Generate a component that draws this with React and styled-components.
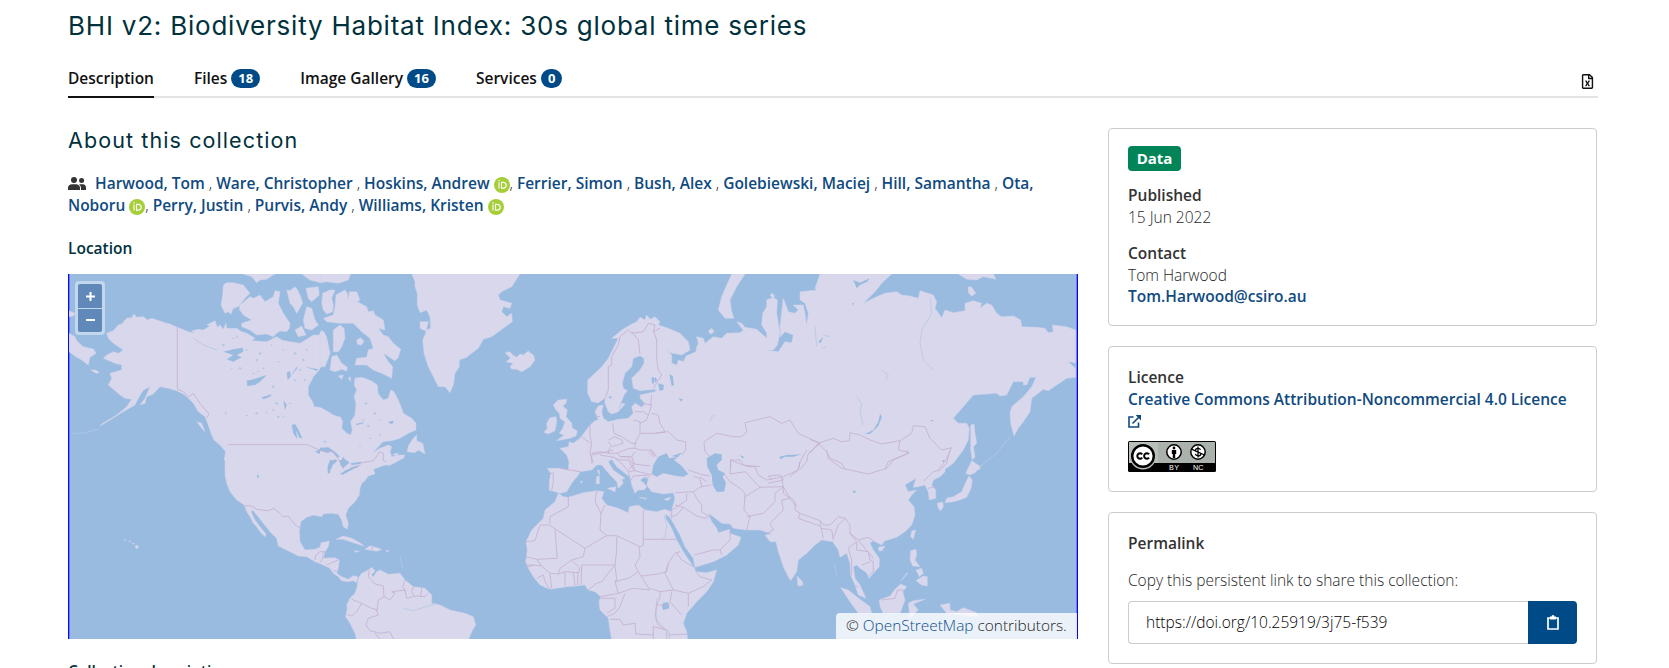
import React from 'react';
import styled, { createGlobalStyle } from 'styled-components';
import { FaRegFileExcel } from 'react-icons/fa';

const Global = createGlobalStyle`
  * { box-sizing: border-box; }
  html, body { margin: 0; background: #fff; overflow: hidden; }
  body { font: 300 15.5px/22px "Open Sans", "Liberation Sans", sans-serif; color: #262626; height: 668px; }
  a { color: #0f4a80; font-weight: 600; text-decoration: none; }
`;

const Page = styled.main`
  padding: 0 71px 0 68px;
  height: 668px;
  overflow: hidden;
`;
const Title = styled.h1`
  margin: 0;
  padding-top: 9px;
  font: 400 26px/34px Inter, sans-serif;
  letter-spacing: 0.78px;
  color: #00313c;
  white-space: nowrap;
`;
const TabBar = styled.nav`
  display: flex;
  gap: 40px;
  height: 43px;
  margin-top: 12px;
  border-bottom: 2px solid #e4e4e4;
`;
const Tab = styled.a`
  display: flex;
  gap: 4px;
  padding-top: 12px;
  height: 43px;
  color: #111;
  line-height: 22px;
  border-bottom: 2px solid ${(p) => (p.$active ? '#111' : 'transparent')};
`;
const Count = styled.span`
  height: 19px;
  margin-top: 2px;
  padding: 0 7px;
  border-radius: 10px;
  background: #004b87;
  color: #fff;
  font-size: 13px;
  font-weight: 700;
  line-height: 19px;
`;
const Export = styled.span`
  margin: 19px 3px 0 auto;
  color: #111;
  svg { display: block; }
`;
const Columns = styled.div`
  display: flex;
  justify-content: space-between;
  padding-top: 30px;
`;
const Main = styled.section`
  width: 1010px;
`;
const SectionTitle = styled.h2`
  margin: -3px 0 0;
  font: 400 21.5px/30px Inter, sans-serif;
  letter-spacing: 1.1px;
  color: #00313c;
`;
const Authors = styled.p`
  margin: 17px 0 0;
  height: 44px;
  white-space: nowrap;
`;
const PeopleIcon = styled.svg`
  width: 18px;
  height: 13px;
  margin-right: 9px;
  vertical-align: -1px;
`;
const OrcidIcon = styled.svg`
  width: 16px;
  height: 16px;
  vertical-align: -4px;
`;
const SubTitle = styled.h3`
  margin: ${(p) => p.$top}px 0 0;
  font-size: 15.5px;
  line-height: 22px;
  font-weight: 600;
  color: #00313c;
`;
const MapBox = styled.div`
  position: relative;
  height: 365px;
  margin-top: 15px;
  background: #99bbe0;
  border: solid #0808f0;
  border-width: 0 1px;
  box-shadow: inset 1px 0 #6f7cf0, inset -1px 0 #6f7cf0;
  overflow: hidden;
`;
const MapSvg = styled.svg`
  display: block;
  width: 1008px;
  height: 365px;
`;
const ZoomBox = styled.div`
  position: absolute;
  left: 6px;
  top: 7px;
  display: grid;
  gap: 1px;
  padding: 3px;
  border-radius: 4px;
  background: rgba(255, 255, 255, 0.4);
`;
const ZoomButton = styled.button`
  display: grid;
  place-items: center;
  width: 24px;
  height: ${(p) => p.$h}px;
  padding: 0;
  border: 0;
  border-radius: ${(p) => p.$radius};
  background: #6088b9;
  svg { display: block; }
`;
const Attribution = styled.div`
  position: absolute;
  right: 0;
  bottom: 0;
  width: 241px;
  height: 26px;
  padding-left: 10px;
  border-radius: 4px 0 0;
  background: rgba(255, 255, 255, 0.8);
  color: #222;
  font-size: 15.4px;
  line-height: 26px;
  white-space: nowrap;
  a { font-weight: 300; color: #0c4f8c; }
`;
const Side = styled.aside`
  display: flex;
  flex-direction: column;
  gap: 20px;
  width: 489px;
  margin-right: 1px;
`;
const Card = styled.section`
  height: ${(p) => p.$h}px;
  padding: ${(p) => p.$top}px 19px 0;
  border: 1px solid #ccc;
  border-radius: 4px;
  p { margin: 0; }
`;
const Label = styled.h4`
  margin: ${(p) => p.$top || 0}px 0 ${(p) => p.$bottom || 0}px;
  font-size: 15.5px;
  line-height: 22px;
  font-weight: 600;
  color: #333;
`;
const DataTag = styled.span`
  display: block;
  width: 53px;
  height: 25px;
  border-radius: 4px;
  background: #008458;
  color: #fff;
  font-size: 15px;
  font-weight: 700;
  line-height: 25px;
  text-align: center;
`;
const LinkLine = styled.p`
  white-space: nowrap;
  line-height: ${(p) => p.$lh || 22}px;
`;
const ExternalIcon = styled.svg`
  display: block;
  margin-top: 5px;
`;
const Badge = styled.svg`
  display: block;
  margin-top: 13px;
`;
const CopyRow = styled.div`
  display: flex;
  margin-top: 10px;
  height: 43px;
`;
const CopyInput = styled.div`
  width: 400px;
  padding-left: 17px;
  border: 1px solid #ccc;
  border-right: 0;
  border-radius: 4px 0 0 4px;
  color: #000;
  line-height: 41px;
`;
const CopyButton = styled.button`
  display: grid;
  place-items: center;
  width: 49px;
  padding: 0;
  border: 0;
  border-radius: 0 4px 4px 0;
  background: #004b87;
`;

/* Map shapes are digitised on sheets at three units per pixel; each sheet has an origin. */
const SHEETS = {
  A: [60, 270], B: [320, 270], C: [540, 270], D: [810, 270],
  E: [60, 460], F: [500, 450], G: [790, 450],
};
const points = (src) => {
  let origin = SHEETS.A;
  const out = [];
  const tokens = src.trim().split(/\s+/);
  for (let i = 0; i < tokens.length;) {
    if (SHEETS[tokens[i]]) { origin = SHEETS[tokens[i]]; i += 1; continue; }
    out.push(`${(origin[0] + tokens[i] / 3).toFixed(1)} ${(origin[1] + tokens[i + 1] / 3).toFixed(1)}`);
    i += 2;
  }
  return out;
};
const area = (list) => list.map((s) => `M${points(s).join('L')}Z`).join('');
const line = (list) => list.map((s) => `M${points(s).join('L')}`).join('');

const LAND = [
  `A 140 190 160 182 175 165 185 162 200 145 215 143 222 132 230 142 250 140 262 150 275 145 300 153 315 158 330 162 352 172 385 185 405 190 395 183 415 178 430 180 450 168 440 165 465 152 472 172 480 165 490 178 498 160 500 175 530 175 545 185 560 190 585 205 575 212 620 215 650 200 665 210 690 215 720 220 745 205 760 195 778 195
   B 5 180 20 200 15 225 30 245 25 265 0 295 A 778 300 760 320 745 350 745 375 760 400 762 410 778 412 B 0 412 25 425 40 435 62 442 68 455 65 475 80 490 92 495 97 480 92 455 105 435 108 400 102 380 110 360 103 345 105 325 125 322 155 333 172 345 174 370 190 390 205 385 212 360 222 365 235 390 245 415 250 430 275 445 288 460 288 480 265 490 240 505 215 512 190 515 175 530 160 548 180 535 205 525 215 530 210 545 215 560 240 555 255 555 250 565 225 575 205 585 195 585 160 598
   E 940 25 945 42 925 48 915 62 905 70 900 85 898 105 885 125 865 145 857 165 865 190 862 208 850 200 845 180 835 163 815 160 790 162 785 170 760 165 740 172 722 185 718 215 720 245 735 270 765 268 780 262 783 248 808 243 805 260 795 275 790 295 825 293 838 300 835 325 830 340 845 350 865 358 880 347 893 350 890 368 880 362 865 365 845 362 835 350 820 340 810 325 790 315 765 305 740 290 715 288 690 275 655 258 650 235 630 215 610 190 590 165 578 150 573 155 585 180 600 200 618 222 615 230 600 215 590 200 580 190 570 170 560 155 553 135 530 120 510 95 500 70 495 45 495 0
   A 492 570 497 545 480 525 462 510 455 495 445 465 435 440 415 425 400 400 385 385 370 372 350 362 325 355 300 350 280 372 260 380 255 400 240 405 255 385 270 350 250 360 235 385 225 405 190 425 150 450 120 468 125 462 170 435 200 410 215 388 195 385 180 375 145 345 155 325 150 310 185 300 185 285 165 280 130 265 140 255 160 245 175 250 190 240 160 220 145 205`,
  'A 490 45 500 38 520 38 550 45 570 70 555 85 535 110 520 115 512 133 505 125 495 130 483 105 488 75',
  'A 540 105 570 80 580 85 600 75 615 95 640 80 645 62 660 65 655 100 670 130 690 160 688 175 680 185 660 183 650 190 640 200 620 192 590 195 570 180 545 170 545 160 575 150 550 135 538 118',
  'A 550 12 645 12 620 28 600 30 590 38 575 20', 'A 680 60 690 62 705 50 712 58 720 75 728 100 710 130 700 110 690 100', 'A 738 55 775 50 778 75 755 95 745 85',
  'A 725 12 782 12 782 38 750 30', 'B 0 12 92 12 85 30 55 40 20 35 0 38', 'A 740 110 755 115 765 150 775 165 755 180 735 175 730 150', 'A 705 180 725 168 738 195 715 200',
  'B 8 70 30 60 45 60 35 85 40 105 38 125 20 132 10 120 5 100',
  'B 48 75 75 60 82 70 85 90 88 65 110 65 120 90 112 95 140 110 145 125 160 122 165 135 190 150 195 180 175 175 190 195 205 200 220 220 242 238 235 262 225 272 190 250 205 275 218 290 215 325 185 310 160 300 140 285 105 285 110 265 140 262 145 240 160 235 150 205 125 185 100 160 60 160 20 155 10 145 40 135 45 110',
  'B 40 180 60 165 72 175 75 205 65 230 55 245 40 245', 'B 0 185 12 185 22 210 30 250 15 290 0 290', 'B 35 260 50 255 65 280 82 292 80 303 65 298 45 305 30 300', 'B 110 210 122 203 132 215 122 226 112 222', 'B 55 318 70 315 65 328', 'B 85 325 90 320 92 335',
  'B 275 12 285 35 285 50 292 70 292 105 300 128 320 120 330 140 332 175 315 182 300 175 300 155 325 155 315 195 308 210 312 250 325 290 345 330 355 350 375 350 390 368 400 345 405 310 418 290 418 270 440 262 455 250 475 235 490 208 515 200 550 175 577 155 575 130 560 140 545 125 550 110 570 115 575 100 560 95 540 90 535 75 545 65 575 50 588 30 600 12',
  'B 555 248 570 245 578 255 590 262 600 252 610 255 625 243 632 250 640 255 645 270 630 290 605 305 590 298 575 297 570 290 580 280 558 275 572 265',
  'B 262 545 265 528 280 505 290 495 290 512 308 520 315 552 295 540 285 548', 'B 205 588 215 570 240 560 255 560 225 578', 'B 218 553 235 550 230 558',
  'A 27 190 45 200 50 212 70 230 100 237 108 250 90 262 85 285 65 270 50 262 27 245', 'A 92 300 108 300 118 308 108 310', 'A 27 122 45 130 40 138 27 140',
  'A 410 455 425 460 435 485 425 475', 'A 460 498 480 505 510 545 490 530',
  'C 40 405 55 390 80 388 78 400 68 408 82 420 78 440 95 460 97 475 112 482 108 498 90 505 62 510 50 512 72 495 58 490 68 475 75 455 60 445 58 430 48 420', 'C 20 460 30 443 48 440 50 455 45 482 25 492 12 487 22 475',
  `C 60 535 85 530 88 515 100 520 120 505 135 485 150 465 165 452 175 450 165 425 175 408 190 405 185 425 190 445 205 455 235 448 265 445 280 430 275 410 285 400 305 412 315 400 300 385 300 375 345 365 350 358 320 360 300 362 280 355 275 325 300 300 312 280 312 265 300 257 280 265 275 290 255 310 247 340 250 355 262 362 252 375 240 405 235 425 215 432 205 425 195 400 195 385 175 398 155 395 143 370 143 330 165 310 185 290 205 265 220 235 235 205 215 205 245 180 270 165 290 155 300 142 315 150 320 135 330 148 345 140 360 155 355 165 385 175 420 190 445 215 450 240 425 255 390 248 375 235 395 255 395 280 410 285 415 270 430 275 438 258 468 245 470 230 475 220 470 200 490 205 495 220 520 200 545 205 560 190 600 188 610 180 590 155 605 160 615 172 650 178 680 205 680 190 665 165 668 130 680 110 680 90 700 82 712 90 710 130 720 190 712 225 700 240 680 240 715 245 735 215 755 218 760 195 735 185 722 200 720 170 725 125 730 85 745 125 765 130 775 120 760 105 790 105 795 130 800 165 805 130 795 100 780 90 780 65 830 60
   D 15 55 30 12 245 12 215 40 195 65 160 100 200 80 225 70 260 65 275 75 300 78 325 85 330 62 370 75 380 95 375 115 395 143 405 120 430 128 465 122 465 100 490 92 515 100 510 115 530 100 545 105 560 130 575 140 610 138 632 150 635 170 680 172 705 175 715 188 730 185 727 165 770 170 797 180 797 322 770 325 740 345 715 362 700 358 685 370 665 385 660 425 640 455 625 475 612 498 602 460 600 430 605 410 640 380 665 350 678 322 660 322 650 345 640 345 640 335 610 335 590 375 570 378 560 370 490 375 460 410 430 445 445 460 470 460 478 475 475 510 460 540 430 580 405 598
   G 465 65 450 80 430 90 425 105 437 120 437 145 418 150 415 125 405 105 385 110 370 112 378 85 345 105 355 125 380 120 365 135 355 150 372 170 375 195 365 225 345 245 320 262 285 272 275 285 250 272 240 280 250 300 268 325 268 350 250 370 237 385 230 368 210 355 200 345 190 350 195 385 210 405 228 445 205 435 195 405 182 375 180 340 170 310 150 322 145 300 128 275 95 270 75 285 50 310 25 330 22 350 20 365 5 388
   F 870 390 852 355 835 305 828 275 810 275 795 255 815 252 780 240 740 240 700 235 690 222 665 220 640 200 625 190 635 215 650 235 655 248 690 238 690 250 723 262 715 285 680 315 640 335 585 352 580 325 555 290 540 255 520 220 512 205 507 190 515 180 525 145 520 128 490 132 455 125 440 105 445 88 435 80 420 90 432 100 440 110 432 120 415 120 405 130 395 105 390 80 375 70 350 50 335 28 325 35 340 60 375 85 365 88 370 100 355 115 350 95 330 75 305 45 290 45 275 60 240 65 235 75 215 100 200 125 180 130 165 125 148 120 148 95 152 70 142 55 180 55 205 60 207 35 200 15 185 0`,
  'C 575 12 615 12 590 50 570 90 575 125 582 145 555 145 535 120 545 80 560 45', 'C 505 183 515 175 522 185 512 193', 'C 690 75 697 70 704 78 698 83',
  'D 445 12 550 12 558 28 520 20 500 30 470 28', 'D 475 50 485 52 497 70 485 78 475 68', 'C 235 425 245 400 255 402',
  'D 482 465 492 462 495 490 500 520 490 530 495 560 487 570 482 540', 'D 480 598 487 580 510 595 510 598',
  'G 545 32 572 50 555 68 540 75 527 70', 'G 537 78 547 90 543 115 530 142 510 150 490 155 465 158 470 145 490 140 515 125 528 95', 'G 442 160 458 156 460 170 452 182 445 175', 'G 545 0 552 5 550 20 545 12',
  'G 365 243 377 240 370 268 362 260', 'G 265 292 285 288 275 303 267 302', 'G 362 302 378 298 380 315 375 330 390 350 368 348 360 330', 'G 378 392 400 378 412 380 412 408 395 405', 'G 378 360 395 355 400 370 388 380', 'G 333 392 350 370 355 368',
  'G 268 450 300 438 315 418 332 402 350 410 338 425 345 450 330 490 280 490 270 470', 'G 152 413 175 420 200 440 240 470 245 490 205 490 180 455', 'G 355 460 370 452 405 448 370 462 385 480 360 505', 'G 450 465 480 460 480 480 500 485 520 473 560 488 560 500 470 490', 'G 22 380 38 395 38 406 25 408',
  'E 893 370 895 355 905 340 925 330 935 322 945 332 935 345 940 350 950 335 960 330 985 343 1020 340 1035 360 1060 380 1095 385 1115 405 1115 430 1140 435 1170 450 1215 460 1240 470 1247 495 1235 515 1225 540 890 540 885 520 870 490 857 470 862 445 860 435 870 415 885 400 890 385',
  'E 828 238 850 228 875 235 900 248 912 258 885 250 850 238', 'E 915 268 930 257 965 268 950 274', 'E 978 271 988 272 980 276', 'E 882 272 898 274 888 277', 'E 225 258 232 256 236 262 229 266', 'E 215 250 222 250 220 253', 'E 192 239 198 239 196 242', 'E 206 243 212 244 210 247',
  'F 165 155 175 130 190 140 205 142 250 128 290 122 312 125 305 145 320 165 355 175 385 188 388 170 415 165 435 180 470 185 495 178 510 184 512 205 497 192 497 205 515 235 530 270 550 305 580 350 590 365 620 368 650 360 640 395 620 425 590 455 560 490 550 520 560 545 563 570 335 570 330 540 325 505 300 480 297 455 302 440 285 425 265 420 255 405 230 408 200 410 150 418 120 405 100 380 85 355 77 335 82 300 78 275 95 240 130 205 135 180',
  'F 290 80 298 78 298 102 288 100', 'F 292 62 298 60 298 75', 'F 322 115 348 110 345 125', 'F 418 142 440 145 438 148', 'F 492 148 512 142 505 152', 'F 240 95 247 93 245 99', 'F 893 380 902 392 900 408 893 405',
];

const WATER = [
  'A 490 245 520 238 548 233 550 245 530 255 545 262 520 275 500 268 520 255', 'A 560 332 580 328 620 315 600 335 585 345 562 348', 'A 605 382 635 373 630 380 610 388', 'A 695 465 705 462 715 478 727 505 718 503 708 480 712 508 700 490', 'A 680 308 690 303 692 320 683 330', 'A 690 320 710 290 712 295', 'A 735 290 775 298 770 302',
  'A 670 390 680 405 675 420', 'A 765 545 780 538 780 552',
  'B 0 533 25 532 45 545 60 560 52 562 35 545 20 548 0 542', 'E 810 0 818 0 812 15 810 40 803 40 803 18', 'E 838 0 860 0 868 8 852 22 842 18', 'E 840 42 858 30 895 15 892 22 870 32 848 44', 'E 870 10 905 5 900 12 875 15', 'B 108 462 130 456 130 460 110 466', 'B 205 455 220 452 220 460 212 462', 'E 590 44 596 46 597 54 592 52',
  'B 60 580 70 560 80 575 70 598', 'B 22 598 28 578 45 568 52 572 38 585 34 598',
  'C 355 340 372 345 370 360 358 362', 'C 388 312 398 318 402 345 395 348', 'C 415 385 428 388 424 395', 'C 335 320 345 325 340 345 335 335', 'C 345 320 352 330 345 340', 'C 205 380 215 378 212 388', 'C 718 560 740 555 785 553 760 560 735 560 722 568',
  'F 455 72 460 45 475 20 500 10 508 25 530 22 515 18 545 8 535 20 522 30 545 48 565 72 550 80 530 78 490 70 470 80', 'F 620 25 645 10 665 13 665 30 650 45 655 60 675 70 668 80 678 100 672 125 650 125 638 105 635 75 622 50',
  'F 485 468 490 458 505 457 508 475 490 480', 'D 165 492 190 480 205 455 210 432 216 440 205 468 180 492', 'D 130 30 150 38 178 25 172 35 150 45 140 55', 'D 25 215 40 200 32 220', 'G 188 122 196 122 198 128 190 128', 'E 935 340 942 342 940 352', 'D 775 275 797 280 797 295', 'D 125 100 132 100 130 106', 'D 395 570 405 572 400 578', 'D 362 450 372 450 366 455',
  'C 600 555 612 560 608 566',
];

const BORDERS = [
  'A 352 172 352 357 370 365 385 382 400 370 420 400 447 432 440 445', 'A 505 524 742 524 778 540 B 20 545 40 545 70 590', 'B 92 592 115 590 125 578 160 572 180 545 190 550 190 572 200 575',
  'E 555 137 575 138 590 148 625 152 640 145 655 155 668 170 685 168 705 195 720 203', 'E 765 300 768 285 780 275 795 275', 'E 790 275 788 295 780 308', 'E 800 315 815 308 835 300', 'E 820 332 832 333', 'E 935 260 937 273',
  'E 928 330 925 350 945 372 970 378 972 410 990 420 1005 400 995 395 1035 390 1040 415 1070 408 1095 410 1105 400', 'E 1035 360 1028 380 1038 395', 'E 1060 380 1055 395 1062 408', 'E 1085 385 1082 408', 'E 972 410 955 420 952 450 935 445 905 430 875 418', 'E 905 430 890 455 875 468 862 463', 'E 948 450 955 465 925 475 918 495 930 512 960 520 990 515 1000 537', 'E 945 520 960 537',
  'C 195 385 205 360 205 290 215 285 215 260 235 225 240 200 265 180 275 190 310 185 325 160 345 165 340 185 360 175', 'C 275 185 295 210 300 252', 'C 340 180 350 210 350 270 355 300 365 315 340 355', 'C 335 375 332 405', 'C 285 425 310 425 325 435 335 405 300 400', 'C 335 430 355 435 360 460 375 485 345 490 300 490 300 455 280 450', 'C 325 435 320 450 300 460', 'C 218 460 222 490 245 500 275 520 290 520', 'C 345 490 385 485 410 510 437 515 437 540 425 555', 'C 300 490 285 520 285 535 300 540 335 540 350 560', 'C 205 510 225 500 245 510 250 520 215 530 205 515', 'C 150 465 150 500 155 520 150 550 160 580', 'C 125 500 150 520', 'C 155 550 180 545 205 550 210 530', 'C 205 550 235 550 240 545 270 535 285 535', 'C 235 550 240 560 275 560 285 545', 'C 215 560 240 570 265 570 280 598', 'C 330 540 345 560', 'C 168 438 180 440',
  'C 495 545 492 515 530 490 580 500 605 500 620 485 615 458 690 440 725 460 750 450 775 490 830 515 840 520', 'C 495 545 510 560', 'C 572 598 572 570 600 570 610 585 660 590', 'C 840 520 805 550 800 575 780 598',
  'D 0 508 25 520 70 505 95 515 118 512 120 488 150 495 180 510 215 522 270 512 265 540 298 548 270 560 235 575 225 598', 'D 25 520 50 545 60 565 95 580 105 598', 'D 0 550 25 520', 'D 270 512 305 490 310 467 345 470 360 505 395 540 425 533 405 575 385 598',
  'G 0 80 25 60 30 35 50 0', 'G 110 0 115 25 155 55 235 72 290 55 310 30 355 10 350 0', 'G 480 0 470 40 450 60 430 65 400 95', 'G 415 115 435 110',
  'G 0 140 15 155 15 180 30 190 90 212 100 225 120 225 145 200 165 205 180 225 180 250 205 270 235 262 250 272', 'G 30 190 25 205 90 228 92 212', 'G 92 228 100 265', 'G 95 235 125 240 130 270', 'G 130 265 145 225 165 205', 'G 180 250 200 275 175 295 185 330 185 375', 'G 200 275 200 300 235 305 240 330 250 335 250 365 235 378', 'G 205 270 225 295 250 325', 'G 215 345 240 335', 'G 275 450 315 445 322 420 340 420', 'G 195 405 205 412',
  'F 148 70 160 70 160 95 155 120', 'F 180 55 240 65', 'F 275 40 275 15 300 10 340 0', 'F 300 15 340 22', 'F 345 25 370 45 385 65 390 80', 'F 360 20 385 20 400 45 405 62 455 75', 'F 385 65 405 62', 'F 390 95 400 78 445 75', 'F 400 45 385 60', 'F 395 20 402 42 450 48', 'F 445 5 460 20', 'F 440 85 450 78',
  'F 565 60 610 75 630 78', 'F 580 80 600 85 605 110 632 105', 'F 600 80 620 95', 'F 525 128 580 125 595 115 605 110', 'F 580 125 590 145 605 165 605 185 628 200', 'F 560 130 560 150 525 175 515 180', 'F 525 165 550 172 590 198 615 205 628 200', 'F 515 200 530 195 550 172', 'F 515 180 515 205',
  'F 583 315 640 300 660 300 690 270 690 240', 'F 660 300 665 315', 'F 740 240 750 200 732 180 735 130 720 115 690 95 672 72', 'F 690 72 692 30 715 40 745 50 765 50 775 75 800 90 850 80 895 60 900 35', 'F 690 72 735 65 780 112 735 140', 'F 780 112 850 110 825 130 825 155 790 190 740 200', 'F 805 100 850 90 840 75 805 78 815 90', 'F 850 110 870 145 845 150 850 180 810 220 820 240 800 250', 'F 850 110 850 130 870 145 890 170', 'F 850 110 845 85',
  'F 205 142 205 170 150 200 150 222', 'F 78 275 105 272 120 225 148 225 255 295 320 257 300 240 303 190 285 155 290 122', 'F 303 190 315 165', 'F 430 180 430 285 420 290 350 257 320 257', 'F 430 268 530 268', 'F 165 240 172 325 110 328 78 320', 'F 80 352 100 345 125 348 110 328', 'F 80 345 102 345', 'F 255 295 250 320 215 330 180 355 175 372 150 370 125 348', 'F 215 330 240 355 235 368 195 365 175 372', 'F 150 372 155 415', 'F 195 367 195 408', 'F 220 367 225 407', 'F 235 365 232 405', 'F 245 345 243 405', 'F 245 345 345 345 350 300 350 260', 'F 110 385 130 375 135 395 150 418', 'F 265 420 290 400 305 395 345 345 350 390 345 395', 'F 345 395 355 430 302 440', 'F 345 395 385 385 415 365 405 345 420 320 418 290', 'F 415 365 450 420 400 415 355 430', 'F 425 378 475 372 500 365 505 340 525 310 540 305', 'F 530 310 545 330 580 350', 'F 505 340 495 370 520 420 480 425 450 415', 'F 520 420 565 430 610 410 635 390 600 380 585 360', 'F 565 430 565 470', 'F 515 425 510 455 545 495', 'F 480 425 480 440 470 465 510 465', 'F 470 465 465 500 475 525 500 540 500 567', 'F 460 567 460 530 500 540', 'F 375 430 360 470 345 490 320 500', 'F 302 445 345 445 345 475 320 490', 'F 330 508 360 508 370 525 405 520 408 552 460 555', 'F 505 555 560 552',
];

const RIVERS = ['D 360 85 365 130 335 180 330 220 340 270 370 300', 'F 470 445 468 480 470 510 490 530', 'F 505 540 510 567', 'F 492 195 500 225 495 262 485 266', 'A 400 205 430 225 470 240', 'D 215 300 235 315 228 330', 'D 140 380 155 400 150 430 160 465', 'C 510 455 515 440 525 435', 'D 15 170 20 230', 'D 40 195 60 200', 'D 35 235 50 230', 'E 1030 445 1060 452 1130 430', 'E 1020 290 1028 325', 'G 133 340 140 375', 'A 38 490 70 489 115 478', 'D 510 590 560 550 600 500', 'F 345 390 353 398'];

const LAKES = [[497, 428], [560, 436], [590, 430], [620, 428], [640, 350], [655, 275], [610, 295], [595, 305], [540, 295], [515, 295], [490, 225], [520, 205], [532, 200], [560, 240], [590, 270], [670, 240], [705, 250], [720, 300], [735, 330], [705, 330], [650, 400], [670, 440], [655, 440], [690, 400], [640, 420], [580, 310], [600, 250], [635, 225], [730, 270], [760, 295], [740, 240]];
const EAST_LAKES = [[910, 450], [925, 468], [960, 450], [945, 430], [930, 505], [960, 495], [965, 520], [795, 515], [900, 528], [918, 400]];

const WorldMap = () => (
  <MapSvg viewBox="69 274 1008 365">
    <path d={area(LAND)} fill="#d9d7ec" stroke="#cfd3ea" strokeWidth="0.5" strokeLinejoin="round" />
    <path d={area(WATER)} fill="#99bbe0" />
    <path d={line(RIVERS)} fill="none" stroke="#b5c8e5" strokeWidth="0.8" />
    {[...LAKES, ...EAST_LAKES].map(([x, y], i) => (
      <ellipse key={i} cx={60 + x / 3} cy={270 + y / 3} rx={i % 3 ? 1.4 : 0.9} ry={i % 2 ? 0.7 : 1.2} fill="#b4c8e5" />
    ))}
    <path d={line(BORDERS)} fill="none" stroke="#c4afd0" strokeWidth="0.8" strokeLinejoin="round" />
  </MapSvg>
);

const Orcid = () => (
  <OrcidIcon viewBox="0 0 16 16">
    <circle cx="8" cy="8" r="8" fill="#a6ce39" />
    <path d="M5 5.4v6.2M7.5 5.4v5.7h1.7c1.9 0 3-1.2 3-2.85s-1.1-2.85-3-2.85z" fill="none" stroke="#fff" strokeWidth="1.1" />
    <circle cx="5" cy="3.7" r=".75" fill="#fff" />
  </OrcidIcon>
);

const AUTHORS = [
  ['Harwood, Tom'], ['Ware, Christopher'], ['Hoskins, Andrew', true], ['Ferrier, Simon'], ['Bush, Alex'],
  ['Golebiewski, Maciej'], ['Hill, Samantha'], ['Ota, Noboru', true], ['Perry, Justin'], ['Purvis, Andy'], ['Williams, Kristen', true],
];
const AuthorName = ({ name }) => {
  if (name !== 'Ota, Noboru') return <a>{name}</a>;
  return <a>Ota,<br />Noboru</a>;
};

const TABS = [['Description'], ['Files', 18], ['Image Gallery', 16], ['Services', 0]];

export default function App() {
  return (
    <Page>
      <Global />
      <Title>BHI v2: Biodiversity Habitat Index: 30s global time series</Title>
      <TabBar>
        {TABS.map(([name, count], i) => (
          <Tab key={name} $active={i === 0}>{name}{count !== undefined && <Count>{count}</Count>}</Tab>
        ))}
        <Export><FaRegFileExcel size={15} /></Export>
      </TabBar>
      <Columns>
        <Main>
          <SectionTitle>About this collection</SectionTitle>
          <Authors>
            <PeopleIcon viewBox="0 0 18 13" fill="#333">
              <circle cx="6" cy="3" r="3" /><circle cx="13.6" cy="3.4" r="2.5" />
              <path d="M0 13v-2.2C0 8.5 1.8 7.200 4 7.200h4c2.200 0 4 1.300 4 3.600V13zM13 13h5v-2.600c0-1.900-1.300-3.200-3-3.200h-2.600c-.5 0-.9.100-1.300.3 1.200.8 1.900 2 1.900 3.500z" />
            </PeopleIcon>
            {AUTHORS.map(([name, orcid], i) => (
              <React.Fragment key={name}>
                <AuthorName name={name} />{' '}{orcid && <Orcid />}{i < AUTHORS.length - 1 && ', '}
              </React.Fragment>
            ))}
          </Authors>
          <SubTitle $top={21}>Location</SubTitle>
          <MapBox>
            <WorldMap />
            <ZoomBox>
              <ZoomButton $h={24} $radius="2px 2px 0 0" aria-label="Zoom in">
                <svg width="9" height="9"><path d="M0 4.500h9M4.500 0v9" stroke="#fff" strokeWidth="2" /></svg>
              </ZoomButton>
              <ZoomButton $h={23} $radius="0 0 2px 2px" aria-label="Zoom out">
                <svg width="9" height="9"><path d="M0 4h9" stroke="#fff" strokeWidth="2" /></svg>
              </ZoomButton>
            </ZoomBox>
            <Attribution>© <a>OpenStreetMap</a> contributors.</Attribution>
          </MapBox>
          <SubTitle $top={21}>Collection description</SubTitle>
        </Main>
        <Side>
          <Card $h={198} $top={17}>
            <DataTag>Data</DataTag>
            <Label $top={13}>Published</Label>
            <p>15 Jun 2022</p>
            <Label $top={14}>Contact</Label>
            <p>Tom Harwood</p>
            <LinkLine $lh={21}><a>Tom.Harwood@csiro.au</a></LinkLine>
          </Card>
          <Card $h={146} $top={19}>
            <Label>Licence</Label>
            <LinkLine><a>Creative Commons Attribution-Noncommercial 4.0 Licence</a></LinkLine>
            <ExternalIcon width="13" height="13" viewBox="0 0 13 13" fill="none" stroke="#0f4a80" strokeWidth="1.600">
              <path d="M5.500 2H1v10h9.500V7.500M4.500 8.500 11 2" /><path d="M7.600 0H13v5.400z" fill="#0f4a80" stroke="none" />
            </ExternalIcon>
            <Badge width="88" height="31" viewBox="0 0 88 31">
              <rect width="88" height="31" rx="1.500" fill="#000" />
              <rect x="1" y="1" width="86" height="21" fill="#aab2ab" />
              <path d="M1 22h4.500a12.500 12.500 0 0 0 20 0H30V1H1z" fill="#b9bfb9" />
              <circle cx="15" cy="15.500" r="13" fill="#b9bfb9" />
              <circle cx="15" cy="15" r="10.800" fill="#fff" stroke="#000" strokeWidth="2.400" />
              <path d="M14.200 13.400A2.700 2.700 0 1 0 14.200 16.600M21 13.400A2.700 2.700 0 1 0 21 16.600" fill="none" stroke="#000" strokeWidth="2" />
              <circle cx="46" cy="11" r="7.200" fill="#fff" stroke="#000" strokeWidth="1.500" />
              <circle cx="46" cy="7" r="1.400" /><path d="M43.800 9h4.400v4h-1v4h-2.400v-4h-1z" />
              <circle cx="70" cy="11" r="7.200" fill="#fff" stroke="#000" strokeWidth="1.500" />
              <path d="M72.600 8.700c-.5-1-1.500-1.400-2.600-1.400-1.300 0-2.500.7-2.500 1.900 0 2.600 5.300 1.200 5.300 3.700 0 1.200-1.200 1.900-2.700 1.900-1.300 0-2.400-.5-2.900-1.700M70 5.500v11M63.500 8.200l13 5.800" fill="none" stroke="#000" strokeWidth="1.300" />
              <text x="41" y="29" fill="#fff" fontSize="7.200" fontFamily="Liberation Sans" textLength="10">BY</text>
              <text x="65" y="29" fill="#fff" fontSize="7.200" fontFamily="Liberation Sans" textLength="10.500">NC</text>
            </Badge>
          </Card>
          <Card $h={152} $top={19}>
            <Label $bottom={15}>Permalink</Label>
            <p>Copy this persistent link to share this collection:</p>
            <CopyRow>
              <CopyInput>https://doi.org/10.25919/3j75-f539</CopyInput>
              <CopyButton aria-label="Copy">
                <svg width="12" height="15" viewBox="0 0 12 15">
                  <path d="M1 3h10v11H1z" fill="none" stroke="#fff" strokeWidth="1.700" />
                  <path d="M3 1.600h1.500a1.500 1.500 0 0 1 3 0H9V4.500H3z" fill="#fff" />
                </svg>
              </CopyButton>
            </CopyRow>
          </Card>
        </Side>
      </Columns>
    </Page>
  );
}
